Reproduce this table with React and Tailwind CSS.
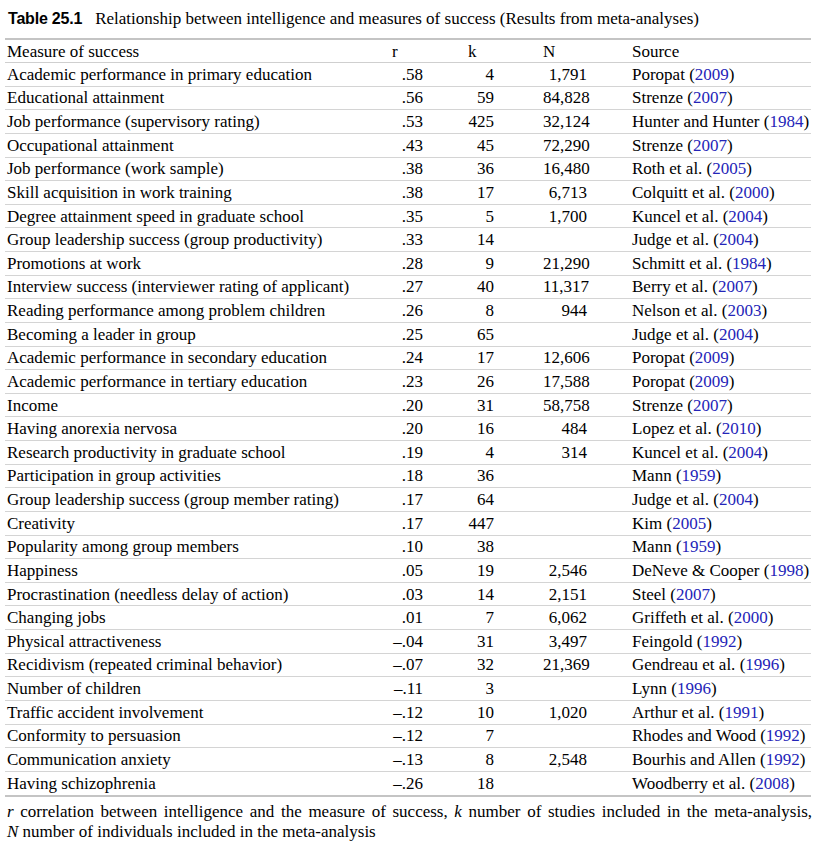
import React from "react";

const rows = [
  ["Academic performance in primary education", ".58", "4", "1,791", "Poropat", "2009"],
  ["Educational attainment", ".56", "59", "84,828", "Strenze", "2007"],
  ["Job performance (supervisory rating)", ".53", "425", "32,124", "Hunter and Hunter", "1984"],
  ["Occupational attainment", ".43", "45", "72,290", "Strenze", "2007"],
  ["Job performance (work sample)", ".38", "36", "16,480", "Roth et al.", "2005"],
  ["Skill acquisition in work training", ".38", "17", "6,713", "Colquitt et al.", "2000"],
  ["Degree attainment speed in graduate school", ".35", "5", "1,700", "Kuncel et al.", "2004"],
  ["Group leadership success (group productivity)", ".33", "14", "", "Judge et al.", "2004"],
  ["Promotions at work", ".28", "9", "21,290", "Schmitt et al.", "1984"],
  ["Interview success (interviewer rating of applicant)", ".27", "40", "11,317", "Berry et al.", "2007"],
  ["Reading performance among problem children", ".26", "8", "944", "Nelson et al.", "2003"],
  ["Becoming a leader in group", ".25", "65", "", "Judge et al.", "2004"],
  ["Academic performance in secondary education", ".24", "17", "12,606", "Poropat", "2009"],
  ["Academic performance in tertiary education", ".23", "26", "17,588", "Poropat", "2009"],
  ["Income", ".20", "31", "58,758", "Strenze", "2007"],
  ["Having anorexia nervosa", ".20", "16", "484", "Lopez et al.", "2010"],
  ["Research productivity in graduate school", ".19", "4", "314", "Kuncel et al.", "2004"],
  ["Participation in group activities", ".18", "36", "", "Mann", "1959"],
  ["Group leadership success (group member rating)", ".17", "64", "", "Judge et al.", "2004"],
  ["Creativity", ".17", "447", "", "Kim", "2005"],
  ["Popularity among group members", ".10", "38", "", "Mann", "1959"],
  ["Happiness", ".05", "19", "2,546", "DeNeve & Cooper", "1998"],
  ["Procrastination (needless delay of action)", ".03", "14", "2,151", "Steel", "2007"],
  ["Changing jobs", ".01", "7", "6,062", "Griffeth et al.", "2000"],
  ["Physical attractiveness", "\u2013.04", "31", "3,497", "Feingold", "1992"],
  ["Recidivism (repeated criminal behavior)", "\u2013.07", "32", "21,369", "Gendreau et al.", "1996"],
  ["Number of children", "\u2013.11", "3", "", "Lynn", "1996"],
  ["Traffic accident involvement", "\u2013.12", "10", "1,020", "Arthur et al.", "1991"],
  ["Conformity to persuasion", "\u2013.12", "7", "", "Rhodes and Wood", "1992"],
  ["Communication anxiety", "\u2013.13", "8", "2,548", "Bourhis and Allen", "1992"],
  ["Having schizophrenia", "\u2013.26", "18", "", "Woodberry et al.", "2008"],
];

const grid = "grid grid-cols-[385px_77px_76px_87px_181px] items-center";

export default function App() {
  return (
    <div className="w-[832px] h-[845px] bg-white text-black font-['Liberation_Serif',serif] text-[17px] overflow-hidden">
      <div className="pt-[9px] pl-[8px] flex items-baseline leading-[20px]">
        <span className="font-['Liberation_Sans',sans-serif] font-bold text-[16px] tracking-[-0.2px]">Table 25.1</span>
        <span className="ml-[13px]">Relationship between intelligence and measures of success (Results from meta-analyses)</span>
      </div>
      <div className="ml-[5px] w-[806px] mt-[9px] border-t-2 border-b-2 border-[#c4c4c4]">
        <div className={`${grid} h-[23px] border-b-[1.5px] border-[#cfcfcf] leading-none`}>
          <div className="pl-[2px]">Measure of success</div>
          <div className="pl-[2px]">r</div>
          <div className="pl-[1px]">k</div>
          <div>N</div>
          <div className="pl-[2px]">Source</div>
        </div>
        {rows.map((r, i) => (
          <div
            key={i}
            className={`${grid} h-[23.63px] leading-none ${i < rows.length - 1 ? "border-b border-[#d4d4d4]" : ""}`}
          >
            <div className="pl-[2px] whitespace-nowrap">{r[0]}</div>
            <div className="text-right pr-[44px]">{r[1]}</div>
            <div className="text-right pr-[49px]">{r[2]}</div>
            <div className="text-right pr-[43px]">{r[3]}</div>
            <div className="pl-[2px] whitespace-nowrap">
              {r[4]} (<span className="text-[#2424b8]">{r[5]}</span>)
            </div>
          </div>
        ))}
      </div>
      <div className="ml-[7px] w-[805px] mt-[5px] leading-[19.5px]">
        <div className="text-justify [text-align-last:justify]">
          <i>r</i> correlation between intelligence and the measure of success, <i>k</i> number of studies included in the meta-analysis,
        </div>
        <div>
          <i>N</i> number of individuals included in the meta-analysis
        </div>
      </div>
    </div>
  );
}
